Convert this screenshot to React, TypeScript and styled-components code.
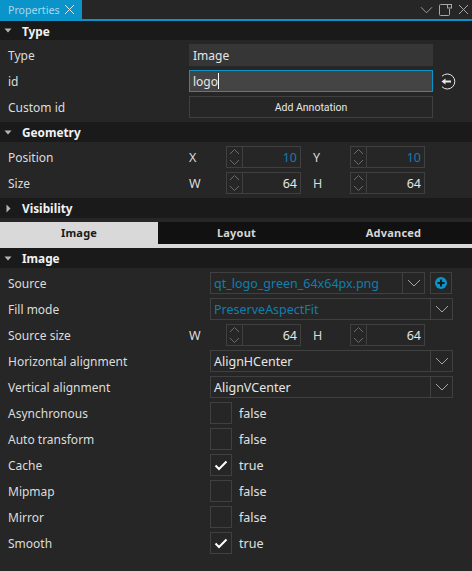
import { ReactNode } from "react";
import styled, { createGlobalStyle } from "styled-components";

const GlobalStyle = createGlobalStyle`
  html, body {
    margin: 0;
    padding: 0;
    background: #262626;
  }
  body {
    font-family: "Noto Sans", "Open Sans", sans-serif;
    font-size: 12.5px;
    color: #e0e0e0;
  }
`;

const Panel = styled.div`
  width: 472px;
  height: 571px;
  overflow: hidden;
  background: #262626;
`;

const TabBar = styled.div`
  display: flex;
  justify-content: space-between;
  height: 19px;
  border-bottom: 2px solid #0a94ca;
`;

const DockTab = styled.div`
  display: flex;
  align-items: center;
  gap: 5px;
  width: 82px;
  box-sizing: border-box;
  padding-left: 8px;
  background: #0a94ca;
  color: #a8d8ec;
  font-size: 10.6px;
`;

const DockTools = styled.div`
  display: flex;
  align-items: center;
  gap: 5px;
  padding-right: 3px;
`;

const SectionHeader = styled.div<{ $height?: number }>`
  display: flex;
  align-items: center;
  height: ${(p) => p.$height ?? 20}px;
  background: #1a1a1a;
  color: #f2f2f2;
  font-weight: 700;
  font-size: 11.8px;
`;

const Caret = styled.span`
  display: flex;
  justify-content: center;
  width: 16px;
  margin-right: 6px;
`;

const Rows = styled.div`
  display: flex;
  flex-direction: column;
  gap: 4px;
  padding: 4px 0;
`;

const Row = styled.div`
  display: flex;
  align-items: center;
  height: 22px;
  padding-left: 8px;
`;

const Label = styled.span<{ $width?: number }>`
  flex: none;
  width: ${(p) => p.$width ?? 202}px;
  color: #dcdcdc;
  font-size: 12px;
`;

const Field = styled.div<{ $focus?: boolean; $filled?: boolean }>`
  display: flex;
  align-items: center;
  box-sizing: border-box;
  width: 244px;
  height: 22px;
  padding-left: 3px;
  border: 1px solid ${(p) => (p.$focus ? "#0a94ca" : p.$filled ? "#363636" : "#404040")};
  background: ${(p) => (p.$focus ? "#444444" : p.$filled ? "#363636" : "transparent")};
  color: #e6e6e6;
  font-size: 12px;
`;

const TextCursor = styled.span`
  width: 1px;
  height: 16px;
  background: #ffffff;
`;

const FlatButton = styled.div`
  display: flex;
  align-items: center;
  justify-content: center;
  box-sizing: border-box;
  width: 244px;
  height: 22px;
  border: 1px solid #404040;
  color: #e6e6e6;
  font-family: Roboto, sans-serif;
  font-size: 10.5px;
`;

const AxisLabel = styled.span`
  flex: none;
  width: 37px;
  color: #dcdcdc;
`;

const SpinBox = styled.div`
  display: flex;
  flex: none;
  box-sizing: border-box;
  width: 75px;
  height: 22px;
  margin-right: 12px;
  border: 1px solid #404040;
`;

const SpinArrows = styled.div`
  display: flex;
  flex: none;
  align-items: center;
  justify-content: center;
  width: 15px;
  border-right: 1px solid #404040;
`;

const SpinValue = styled.div<{ $accent?: boolean }>`
  flex: 1;
  align-self: center;
  padding-right: 3px;
  text-align: right;
  color: ${(p) => (p.$accent ? "#0f7fae" : "#e6e6e6")};
`;

const Combo = styled.div<{ $width: number; $accent?: boolean }>`
  display: flex;
  flex: none;
  box-sizing: border-box;
  width: ${(p) => p.$width}px;
  height: 22px;
  border: 1px solid #404040;
  color: ${(p) => (p.$accent ? "#0f7fae" : "#e6e6e6")};
`;

const ComboText = styled.span`
  flex: 1;
  align-self: center;
  padding-left: 3px;
  white-space: nowrap;
`;

const ComboArrow = styled.span`
  display: flex;
  flex: none;
  align-items: center;
  justify-content: center;
  width: 21px;
  border-left: 1px solid #404040;
`;

const AddButton = styled.div`
  display: flex;
  flex: none;
  align-items: center;
  justify-content: center;
  box-sizing: border-box;
  width: 22px;
  height: 22px;
  margin-left: 5px;
  border: 1px solid #404040;
`;

const Check = styled.div`
  display: flex;
  flex: none;
  align-items: center;
  justify-content: center;
  box-sizing: border-box;
  width: 22px;
  height: 22px;
  margin-right: 7px;
  border: 1px solid #404040;
`;

const ViewTabs = styled.div`
  display: grid;
  grid-template-columns: 158px 157px 157px;
  margin-top: 4px;
  border-bottom: 4px solid #d9d9d9;
`;

const ViewTab = styled.div<{ $active?: boolean }>`
  height: 22px;
  line-height: 22px;
  text-align: center;
  font-weight: 700;
  font-size: 11px;
  letter-spacing: 0.2px;
  background: ${(p) => (p.$active ? "#d9d9d9" : "#111111")};
  color: ${(p) => (p.$active ? "#1a1a1a" : "#d6d6d6")};
`;

const ReturnIcon = styled.svg`
  margin-left: 6px;
`;

function Close({ color = "#a8a8a8", size = 11 }: { color?: string; size?: number }) {
  return (
    <svg width={size} height={size} viewBox="0 0 11 11" fill="none" stroke={color} strokeWidth="1">
      <path d="M1 1l9 9M10 1l-9 9" />
    </svg>
  );
}

function Chevron({ color = "#a8a8a8", width = 14, height = 8 }: { color?: string; width?: number; height?: number }) {
  return (
    <svg width={width} height={height} viewBox="0 0 14 8" fill="none" stroke={color} strokeWidth="1">
      <path d="M1 1l6 6 6-6" />
    </svg>
  );
}

function Section({ title, open = true, height }: { title: string; open?: boolean; height?: number }) {
  return (
    <SectionHeader $height={height}>
      <Caret>
        {open ? (
          <svg width="8" height="5" viewBox="0 0 8 5" fill="#b5b5b5">
            <path d="M0.5 0.5h7L4 4.5z" />
          </svg>
        ) : (
          <svg width="5" height="9" viewBox="0 0 5 9" fill="#b5b5b5">
            <path d="M0.5 0.5v8L4.5 4.5z" />
          </svg>
        )}
      </Caret>
      {title}
    </SectionHeader>
  );
}

function Spin({ value, accent }: { value: string; accent?: boolean }) {
  return (
    <SpinBox>
      <SpinArrows>
        <svg width="11" height="18" viewBox="0 0 11 18" fill="none" stroke="#6e6a6e" strokeWidth="1">
          <path d="M1 6l4.5-4.5L10 6M1 12l4.5 4.5L10 12" />
        </svg>
      </SpinArrows>
      <SpinValue $accent={accent}>{value}</SpinValue>
    </SpinBox>
  );
}

function PairRow({ label, a, b, accent, axes }: { label: string; a: string; b: string; accent?: boolean; axes: [string, string] }) {
  return (
    <Row>
      <Label $width={181}>{label}</Label>
      <AxisLabel>{axes[0]}</AxisLabel>
      <Spin value={a} accent={accent} />
      <AxisLabel>{axes[1]}</AxisLabel>
      <Spin value={b} accent={accent} />
    </Row>
  );
}

function ComboBox({ text, width, accent }: { text: string; width: number; accent?: boolean }) {
  return (
    <Combo $width={width} $accent={accent}>
      <ComboText>{text}</ComboText>
      <ComboArrow>
        <Chevron color="#ada297" />
      </ComboArrow>
    </Combo>
  );
}

function PropRow({ label, children }: { label: string; children: ReactNode }) {
  return (
    <Row>
      <Label>{label}</Label>
      {children}
    </Row>
  );
}

function BoolRow({ label, on }: { label: string; on?: boolean }) {
  return (
    <PropRow label={label}>
      <Check>
        {on && (
          <svg width="14" height="11" viewBox="0 0 14 11" fill="none" stroke="#ffffff" strokeWidth="2">
            <path d="M1.5 5.5l3.5 3.5 7.5-7.5" />
          </svg>
        )}
      </Check>
      {on ? "true" : "false"}
    </PropRow>
  );
}

export default function App() {
  return (
    <Panel>
      <GlobalStyle />
      <TabBar>
        <DockTab>
          Properties
          <Close color="#d5edf7" />
        </DockTab>
        <DockTools>
          <Chevron width={13} height={8} />
          <svg width="15" height="14" viewBox="0 0 15 14" fill="none" stroke="#a8a8a8" strokeWidth="1">
            <path d="M9 1.5H2.5a1 1 0 0 0-1 1v9a1 1 0 0 0 1 1h8a1 1 0 0 0 1-1V6" />
            <rect x="9.5" y="1.5" width="4" height="3.5" />
          </svg>
          <Close />
        </DockTools>
      </TabBar>

      <Section title="Type" height={19} />
      <Rows>
        <Row>
          <Label $width={181}>Type</Label>
          <Field $filled>Image</Field>
        </Row>
        <Row>
          <Label $width={181}>id</Label>
          <Field $focus>
            logo
            <TextCursor />
          </Field>
          <ReturnIcon width="17" height="17" viewBox="0 0 17 17" fill="none" stroke="#e8e8e8" strokeWidth="1">
            <path d="M3 3.2A7.5 7.5 0 1 1 3 13.8" />
            <path d="M12 8.5H5" strokeWidth="2" />
            <path d="M2.5 8.5L6.5 5.5v6z" fill="#e8e8e8" stroke="none" />
          </ReturnIcon>
        </Row>
        <Row>
          <Label $width={181}>Custom id</Label>
          <FlatButton>Add Annotation</FlatButton>
        </Row>
      </Rows>

      <Section title="Geometry" />
      <Rows>
        <PairRow label="Position" axes={["X", "Y"]} a="10" b="10" accent />
        <PairRow label="Size" axes={["W", "H"]} a="64" b="64" />
      </Rows>

      <Section title="Visibility" open={false} />
      <ViewTabs>
        <ViewTab $active>Image</ViewTab>
        <ViewTab>Layout</ViewTab>
        <ViewTab>Advanced</ViewTab>
      </ViewTabs>

      <Section title="Image" />
      <Rows>
        <PropRow label="Source">
          <ComboBox text="qt_logo_green_64x64px.png" width={215} accent />
          <AddButton>
            <svg width="14" height="14" viewBox="0 0 14 14">
              <circle cx="7" cy="7" r="6" fill="#0a94ca" />
              <path d="M7 3.5v7M3.5 7h7" stroke="#1a1a1a" strokeWidth="2" />
            </svg>
          </AddButton>
        </PropRow>
        <PropRow label="Fill mode">
          <ComboBox text="PreserveAspectFit" width={243} accent />
        </PropRow>
        <PairRow label="Source size" axes={["W", "H"]} a="64" b="64" />
        <PropRow label="Horizontal alignment">
          <ComboBox text="AlignHCenter" width={243} />
        </PropRow>
        <PropRow label="Vertical alignment">
          <ComboBox text="AlignVCenter" width={243} />
        </PropRow>
        <BoolRow label="Asynchronous" />
        <BoolRow label="Auto transform" />
        <BoolRow label="Cache" on />
        <BoolRow label="Mipmap" />
        <BoolRow label="Mirror" />
        <BoolRow label="Smooth" on />
      </Rows>
    </Panel>
  );
}
